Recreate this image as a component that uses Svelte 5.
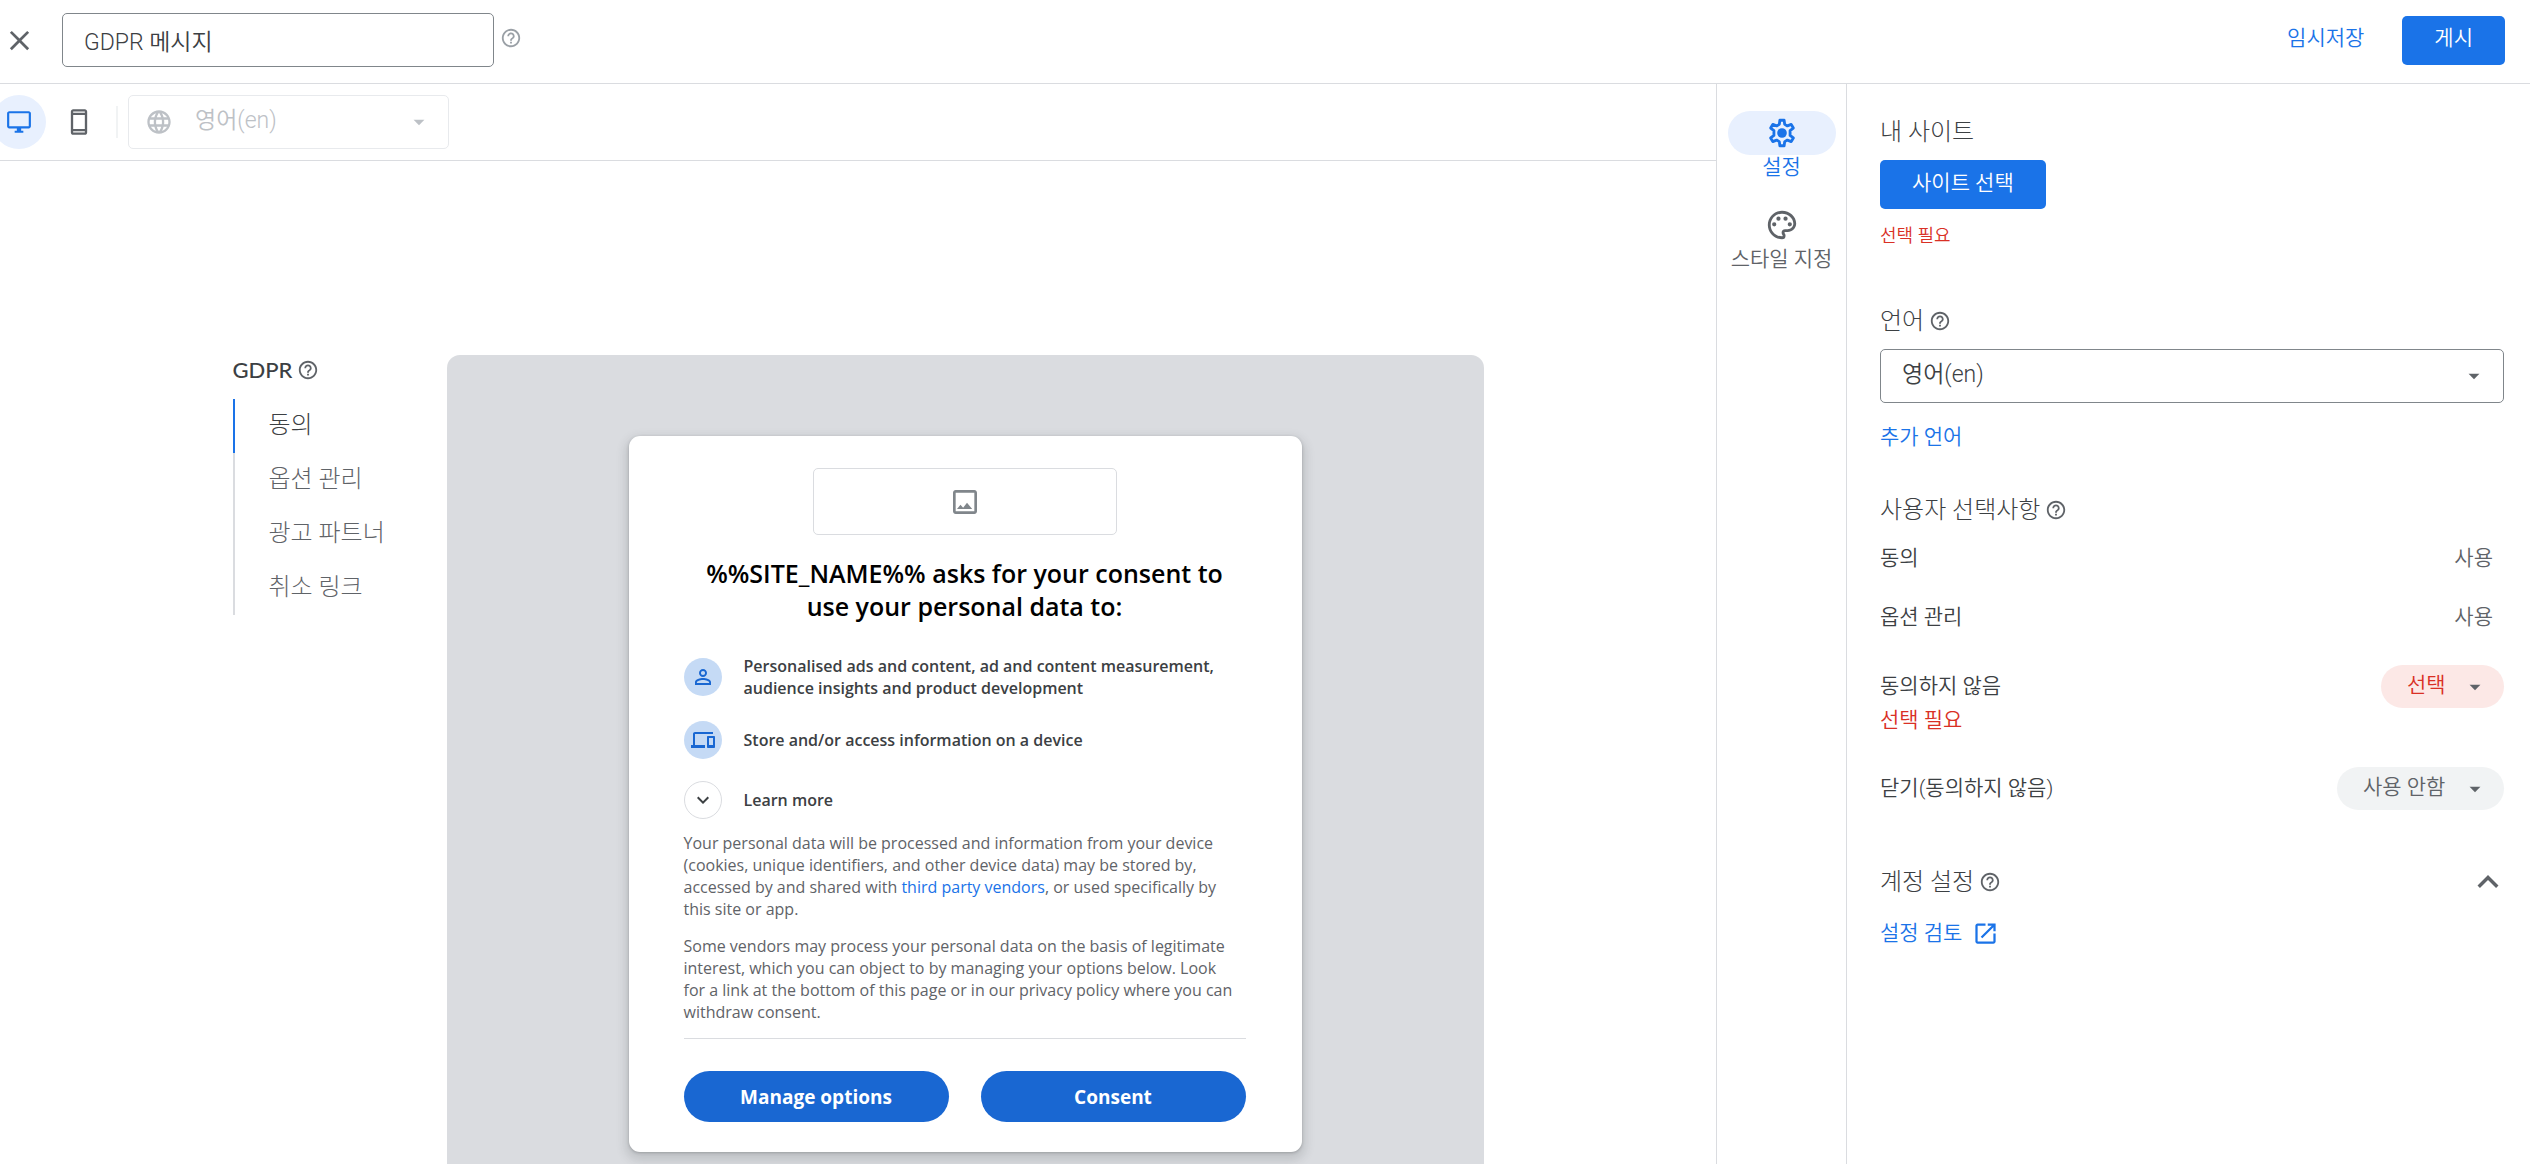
<script>
  let messageName = $state('GDPR 메시지');
  let activeStep  = $state(0);

  const steps = ['동의', '옵션 관리', '광고 파트너', '취소 링크'];

  const helpPath = 'M11 18h2v-2h-2v2zm1-16C6.48 2 2 6.48 2 12s4.48 10 10 10 10-4.48 10-10S17.52 2 12 2zm0 18c-4.41 0-8-3.59-8-8s3.59-8 8-8 8 3.59 8 8-3.59 8-8 8zm0-14c-2.21 0-4 1.79-4 4h2c0-1.1.9-2 2-2s2 .9 2 2c0 2-3 1.75-3 5h2c0-2.25 3-2.5 3-5 0-2.21-1.79-4-4-4z';
</script>

{#snippet icon(d, size, cls = '')}
  <svg class={cls} width={size} height={size} viewBox="0 0 24 24" fill="currentColor" aria-hidden="true"><path {d} /></svg>
{/snippet}

{#snippet help()}
  <button class="icon-btn help" aria-label="도움말">{@render icon(helpPath, 22)}</button>
{/snippet}

{#snippet arrow()}
  {@render icon('M7 10l5 5 5-5z', 26, 'arrow')}
{/snippet}

<div class="app">
  <header>
    <button class="icon-btn close" aria-label="닫기">
      {@render icon('M19 6.41L17.59 5 12 10.59 6.41 5 5 6.41 10.59 12 5 17.59 6.41 19 12 13.41 17.59 19 19 17.59 13.41 12z', 33)}
    </button>
    <input class="name" aria-label="메시지 이름" bind:value={messageName} />
    {@render help()}
    <div class="actions">
      <button class="btn-text">임시저장</button>
      <button class="btn-primary">게시</button>
    </div>
  </header>

  <div class="workspace">
    <main>
      <div class="toolbar">
        <button class="device active" aria-label="데스크톱">
          {@render icon('M21 2H3c-1.1 0-2 .9-2 2v12c0 1.1.9 2 2 2h7v2H8v2h8v-2h-2v-2h7c1.1 0 2-.9 2-2V4c0-1.1-.9-2-2-2zm0 14H3V4h18v12z', 26)}
        </button>
        <button class="device" aria-label="모바일">
          {@render icon('M17 1.01L7 1c-1.1 0-1.99.9-1.99 2v18c0 1.1.89 2 1.99 2h10c1.1 0 2-.9 2-2V3c0-1.1-.9-1.99-2-1.99zM17 21H7v-1h10v1zm0-3H7V6h10v12zM7 4V3h10v1H7z', 28)}
        </button>
        <span class="divider"></span>
        <div class="select preview-lang">
          {@render icon('M11.99 2C6.47 2 2 6.48 2 12s4.47 10 9.99 10C17.52 22 22 17.52 22 12S17.52 2 11.99 2zm6.93 6h-2.95c-.32-1.25-.78-2.45-1.38-3.56 1.84.63 3.37 1.91 4.33 3.56zM12 4.04c.83 1.2 1.48 2.53 1.91 3.96h-3.82c.43-1.43 1.08-2.76 1.91-3.96zM4.26 14C4.1 13.36 4 12.69 4 12s.1-1.36.26-2h3.38c-.08.66-.14 1.32-.14 2s.06 1.34.14 2H4.26zm.82 2h2.95c.32 1.25.78 2.45 1.38 3.56-1.84-.63-3.37-1.9-4.33-3.56zm2.95-8H5.08c.96-1.66 2.49-2.93 4.33-3.56C8.81 5.55 8.35 6.75 8.03 8zM12 19.96c-.83-1.2-1.48-2.53-1.91-3.96h3.82c-.43 1.43-1.08 2.76-1.91 3.96zM14.34 14H9.66c-.09-.66-.16-1.32-.16-2s.07-1.35.16-2h4.68c.09.65.16 1.32.16 2s-.07 1.34-.16 2zm.25 5.56c.6-1.11 1.06-2.31 1.38-3.56h2.95c-.96 1.65-2.49 2.93-4.33 3.56zM16.36 14c.08-.66.14-1.32.14-2s-.06-1.34-.14-2h3.38c.16.64.26 1.31.26 2s-.1 1.36-.26 2h-3.38z', 28, 'globe')}
          <select aria-label="미리보기 언어" disabled><option>영어(en)</option></select>
          {@render arrow()}
        </div>
      </div>

      <div class="canvas">
        <nav>
          <h2 class="latin">GDPR {@render help()}</h2>
          <ul>
            {#each steps as step, i}
              <li class:active={activeStep === i}>
                <button onclick={() => activeStep = i}>{step}</button>
              </li>
            {/each}
          </ul>
        </nav>

        <div class="preview">
          <article>
            <div class="logo-slot">
              {@render icon('M19 5v14H5V5h14m0-2H5c-1.1 0-2 .9-2 2v14c0 1.1.9 2 2 2h14c1.1 0 2-.9 2-2V5c0-1.1-.9-2-2-2zM6 17.3l2.6-3.3 2 2.3 2.9-3.8 3.9 4.8z', 32)}
            </div>
            <h1>%%SITE_NAME%% asks for your consent to use your personal data to:</h1>
            <ul class="purposes">
              <li>
                <span class="dot">
                  {@render icon('M12 5.9a2.1 2.1 0 110 4.2 2.1 2.1 0 010-4.2m0 9c2.97 0 6.1 1.46 6.1 2.1v1.1H5.9V17c0-.64 3.13-2.1 6.1-2.1M12 4C9.79 4 8 5.79 8 8s1.79 4 4 4 4-1.79 4-4-1.79-4-4-4zm0 9c-2.67 0-8 1.34-8 4v3h16v-3c0-2.66-5.33-4-8-4z', 24)}
                </span>
                <span>Personalised ads and content, ad and content measurement, audience insights and product development</span>
              </li>
              <li>
                <span class="dot">
                  {@render icon('M4 6h18V4H4c-1.1 0-2 .9-2 2v11H0v3h14v-3H4V6zm19 2h-6c-.55 0-1 .45-1 1v10c0 .55.45 1 1 1h6c.55 0 1-.45 1-1V9c0-.55-.45-1-1-1zm-1 9h-4v-7h4v7z', 24)}
                </span>
                <span>Store and/or access information on a device</span>
              </li>
              <li>
                <button class="dot outline" aria-label="Learn more">
                  {@render icon('M7.41 8.59L12 13.17l4.59-4.58L18 10l-6 6-6-6 1.41-1.41z', 24)}
                </button>
                <span>Learn more</span>
              </li>
            </ul>
            <p>Your personal data will be processed and information from your device (cookies, unique identifiers, and other device data) may be stored by, accessed by and shared with <a href="#vendors">third party vendors</a>, or used specifically by this site or app.</p>
            <p>Some vendors may process your personal data on the basis of legitimate interest, which you can object to by managing your options below. Look for a link at the bottom of this page or in our privacy policy where you can withdraw consent.</p>
            <footer>
              <button>Manage options</button>
              <button>Consent</button>
            </footer>
          </article>
        </div>
      </div>
    </main>

    <div class="rail">
      <button class="active">
        <span class="pill">
          <svg width="34" height="34" viewBox="0 0 24 24" aria-hidden="true">
            <path fill="none" stroke="currentColor" stroke-width="2" stroke-linejoin="round" d="M10.5 3h3l.4 2.9 1.9 1.1 2.7-1.1 1.5 2.6-2.3 1.8v3.4l2.3 1.8-1.5 2.6-2.7-1.1-1.9 1.1-.4 2.9h-3l-.4-2.9L8.200 17l-2.7 1.1L4 15.500l2.3-1.8v-3.4L4 8.500l1.5-2.6L8.200 7l1.900-1.100z" />
            <circle cx="12" cy="12" r="3.400" fill="currentColor" />
          </svg>
        </span>
        설정
      </button>
      <button>
        <span class="pill">
          {@render icon('M12 22C6.49 22 2 17.51 2 12S6.49 2 12 2s10 4.04 10 9c0 3.31-2.69 6-6 6h-1.77c-.28 0-.5.22-.5.5 0 .12.05.23.13.33.41.47.64 1.06.64 1.67A2.5 2.5 0 0 1 12 22zm0-18c-4.41 0-8 3.59-8 8s3.59 8 8 8c.28 0 .5-.22.5-.5a.54.54 0 0 0-.14-.35c-.41-.46-.63-1.05-.63-1.65a2.5 2.5 0 0 1 2.5-2.5H16c2.21 0 4-1.79 4-4 0-3.86-3.59-7-8-7zM6.5 10a1.5 1.5 0 1 0 0 3 1.5 1.5 0 1 0 0-3zM9.5 6a1.5 1.5 0 1 0 0 3 1.5 1.5 0 1 0 0-3zM14.5 6a1.5 1.5 0 1 0 0 3 1.5 1.5 0 1 0 0-3zM17.5 10a1.5 1.5 0 1 0 0 3 1.5 1.5 0 1 0 0-3z', 34)}
        </span>
        스타일 지정
      </button>
    </div>

    <aside>
      <section class="site">
        <h2>내 사이트</h2>
        <button class="btn-primary">사이트 선택</button>
        <small class="error">선택 필요</small>
      </section>

      <section class="language">
        <h2><label for="lang">언어</label> {@render help()}</h2>
        <div class="select">
          <select id="lang"><option>영어(en)</option></select>
          {@render arrow()}
        </div>
        <a href="#languages">추가 언어</a>
      </section>

      <section class="choices">
        <h2>사용자 선택사항 {@render help()}</h2>
        <div class="row"><span>동의</span><span class="value">사용</span></div>
        <div class="row"><span>옵션 관리</span><span class="value">사용</span></div>
        <div class="row with-chip two-line">
          <div class="stack">
            <label for="decline">동의하지 않음</label>
            <span class="error">선택 필요</span>
          </div>
          <div class="select chip required">
            <select id="decline"><option>선택</option></select>
            {@render arrow()}
          </div>
        </div>
        <div class="row with-chip">
          <div class="stack">
            <label for="dismiss">닫기(동의하지 않음)</label>
          </div>
          <div class="select chip">
            <select id="dismiss"><option>사용 안함</option></select>
            {@render arrow()}
          </div>
        </div>
      </section>

      <section class="account">
        <h2>
          계정 설정 {@render help()}
          <button class="icon-btn collapse" aria-label="접기">
            {@render icon('M12 8l-6 6 1.41 1.41L12 10.83l4.59 4.58L18 14z', 42)}
          </button>
        </h2>
        <a href="#review">
          설정 검토
          {@render icon('M19 19H5V5h7V3H5c-1.11 0-2 .9-2 2v14c0 1.1.89 2 2 2h14c1.1 0 2-.9 2-2v-7h-2v7zM14 3v2h3.59l-9.83 9.83 1.41 1.41L19 6.41V10h2V3h-7z', 27)}
        </a>
      </section>
    </aside>
  </div>
</div>

<style>
  :global(body) { background: #fff; }
  .app {
    --blue: #1a73e8; --line: #dadce0; --text: #3c4043; --mute: #5f6368; --red: #d93025;
    display: flex; flex-direction: column; height: 100vh; overflow: hidden;
    font-family: Roboto, "Noto Sans CJK KR", sans-serif;
    font-size: 21px; font-weight: 350; line-height: 28px; color: var(--text);
  }
  .app :global(*) { box-sizing: border-box; }
  button, input, select { font: inherit; color: inherit; }
  button { border: 0; padding: 0; background: none; cursor: pointer; }
  h1, h2, ul, p { margin: 0; padding: 0; list-style: none; }
  h2 { display: flex; align-items: center; gap: 5px; font-size: 24px; font-weight: 300; line-height: 30px; }
  a { color: var(--blue); text-decoration: none; }
  svg { display: block; flex: none; }
  .error { color: var(--red); }

  .icon-btn { display: flex; color: var(--mute); }
  .btn-primary {
    height: 49px; padding: 0 32px 4px; border-radius: 5px;
    background: var(--blue); color: #fff;
  }
  .btn-text { color: var(--blue); padding-bottom: 4px; }

  header {
    display: flex; align-items: center; flex: none;
    height: 84px; padding: 0 25px 3px 3px; border-bottom: 1px solid var(--line);
  }
  .name {
    width: 432px; height: 54px; margin: 0 6px 0 26px; padding: 0 21px;
    border: 1px solid #80868b; border-radius: 5px; font-size: 23px; outline: 0;
  }
  header .help { color: #9aa0a6; padding-bottom: 4px; }
  .actions { display: flex; align-items: center; gap: 38px; margin-left: auto; }

  .workspace { flex: 1; display: grid; grid-template-columns: 1fr 131px 683px; min-height: 0; }
  main { display: flex; flex-direction: column; min-width: 0; min-height: 0; }

  .toolbar {
    display: flex; align-items: center; flex: none;
    height: 77px; border-bottom: 1px solid var(--line);
  }
  .device {
    display: grid; place-items: center; width: 54px; height: 54px;
    border-radius: 50%; color: var(--mute);
  }
  .device.active { margin: 0 6px 0 -8px; background: #e8f0fe; color: var(--blue); }
  .divider { width: 2px; height: 32px; margin: 0 10px; background: #f1f3f4; }

  /* the select, its arrow and any leading icon share one grid cell */
  .select {
    display: grid; align-items: center; height: 54px;
    border: 1px solid #80868b; border-radius: 5px;
  }
  .select > :global(*) { grid-area: 1 / 1; }
  .select > :global(.arrow) { justify-self: end; margin-right: 16px; color: var(--mute); pointer-events: none; }
  select {
    appearance: none; width: 100%; height: 100%; padding: 0 50px 3px 21px;
    border: 0; background: none; font-size: 23px; outline: 0; opacity: 1;
  }
  .preview-lang { width: 321px; border-color: #e8eaed; color: #bdc1c6; }
  .preview-lang select { padding-left: 66px; }
  .preview-lang > :global(.globe) { margin-left: 16px; }
  .preview-lang > :global(.arrow) { color: #bdc1c6; }

  .canvas {
    flex: 1; display: flex; justify-content: center;
    min-height: 0; padding-top: 194px;
  }
  nav { width: 214px; }
  nav h2 { height: 30px; margin-bottom: 14px; font-size: 22px; font-weight: 500; }
  .latin { font-family: Lato, "Open Sans", sans-serif; }
  nav li { border-left: 2px solid var(--line); }
  nav li.active { border-color: var(--blue); }
  nav li button {
    width: 100%; height: 54px; padding: 0 0 3px 34px; text-align: left;
    font-size: 24px; font-weight: 300; color: var(--mute);
  }
  nav li.active button { color: var(--text); }

  .preview {
    width: 1037px; padding-top: 81px; border-radius: 13px 13px 0 0;
    background: #dadce0;
  }
  article {
    width: 673px; margin: 0 auto; padding: 32px 56px 30px 55px;
    border-radius: 11px; background: #fff;
    box-shadow: 0 1px 3px rgba(60,64,67,0.3), 0 5px 10px 4px rgba(60,64,67,0.15);
    font-family: "Open Sans", sans-serif; font-size: 16px; line-height: 22px; font-weight: 400;
  }
  .logo-slot {
    display: grid; place-items: center; width: 304px; height: 67px; margin: 0 auto 22px;
    border: 1px solid var(--line); border-radius: 5px; color: #80868b;
  }
  h1 { font-size: 25px; font-weight: 600; line-height: 33px; text-align: center; color: #000; margin-bottom: 32px; }
  .purposes { display: flex; flex-direction: column; gap: 22px; margin-bottom: 13px; font-weight: 600; }
  .purposes li { display: flex; align-items: center; gap: 22px; }
  .dot {
    flex: none; display: grid; place-items: center; width: 38px; height: 38px;
    border-radius: 50%; background: #c5daf5; color: #1967d2;
  }
  .dot.outline { border: 1px solid var(--line); background: none; color: var(--text); }
  article p { margin-bottom: 15px; padding-right: 8px; color: var(--mute); }
  footer {
    display: grid; grid-template-columns: 1fr 1fr; gap: 32px;
    padding-top: 32px; border-top: 1px solid var(--line);
  }
  footer button {
    height: 51px; border-radius: 26px; background: #1967d2; color: #fff;
    font-size: 19px; font-weight: 700;
  }

  .rail {
    display: flex; flex-direction: column; align-items: center; gap: 24px;
    padding-top: 27px; border: 1px solid var(--line); border-width: 0 1px; line-height: 24px;
  }
  .rail button { display: flex; flex-direction: column; align-items: center; color: var(--mute); }
  .rail .active { color: var(--blue); }
  .pill { display: grid; place-items: center; width: 108px; height: 44px; border-radius: 22px; }
  .active .pill { background: #e8f0fe; }

  aside { padding: 33px 26px 0 33px; }
  aside section { margin-bottom: 44px; }
  aside .site { display: flex; flex-direction: column; align-items: flex-start; margin-bottom: 56px; }
  .site h2, .language h2 { margin-bottom: 13px; }
  small { margin-top: 13px; font-size: 18px; }
  .language .select { margin-bottom: 20px; }
  .language a { display: block; }
  .choices h2 { margin-bottom: 19px; }
  .row { display: flex; justify-content: space-between; align-items: flex-start; height: 59px; }
  .row .value { margin-right: 11px; color: var(--mute); }
  .row.with-chip { padding-top: 3px; }
  .row.two-line { height: 102px; }
  .stack { display: flex; flex-direction: column; gap: 6px; padding-top: 7px; }
  .chip { height: 43px; border: 0; border-radius: 22px; background: #f1f3f4; color: var(--mute); }
  .chip.required { background: #fce8e6; color: var(--red); }
  .chip select { padding: 0 58px 3px 26px; font-size: 21px; }
  .account h2 { margin-bottom: 22px; }
  .account .collapse { margin: -6px -5px -6px auto; }
  .account a { display: flex; align-items: center; gap: 10px; }
</style>
